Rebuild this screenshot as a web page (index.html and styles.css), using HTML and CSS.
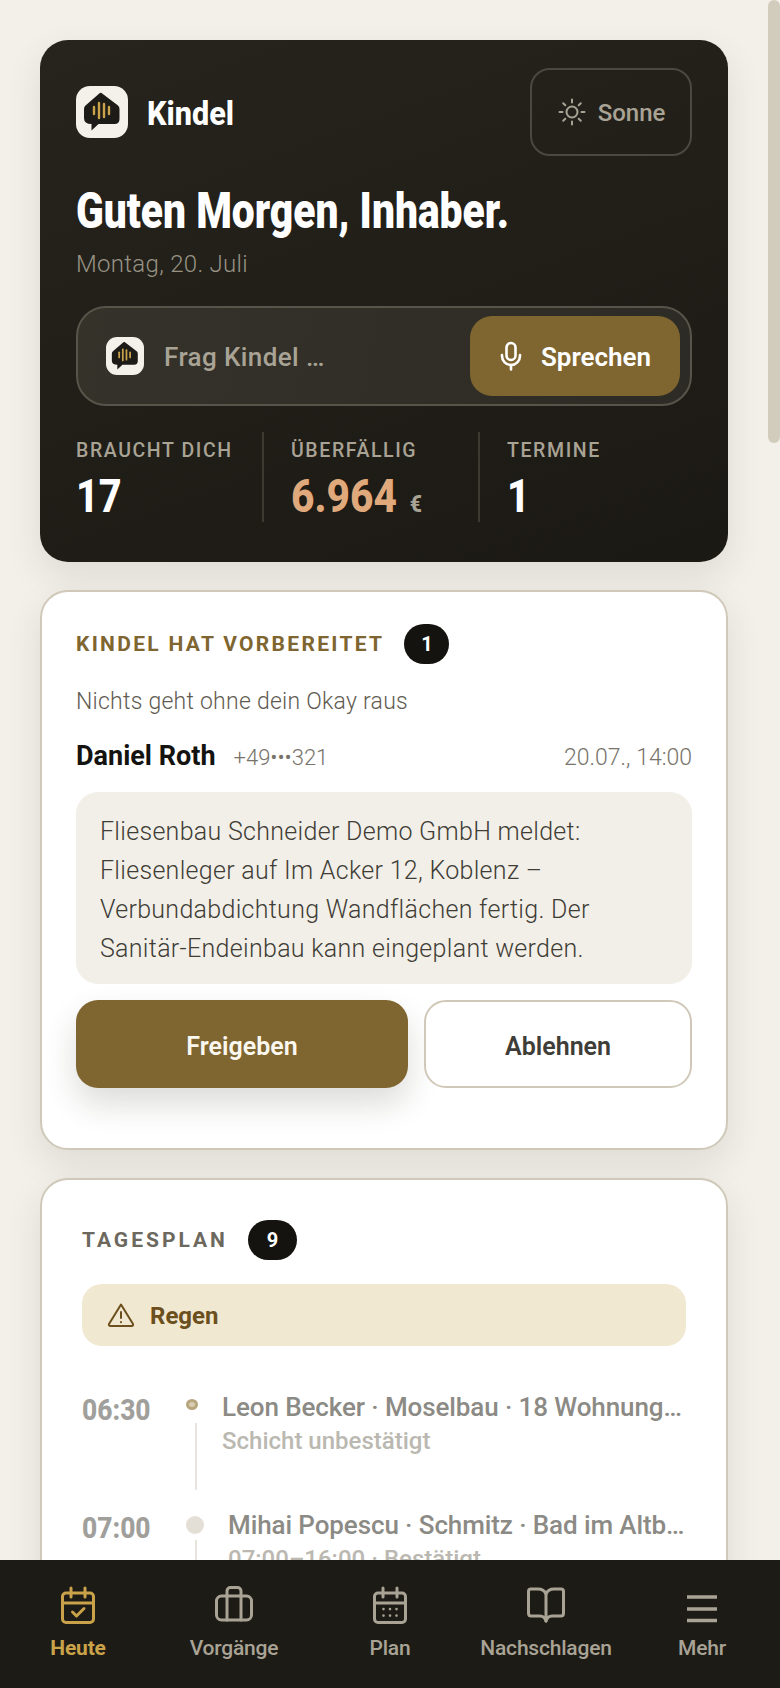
FILE: index.html
```html
<!DOCTYPE html>
<html lang="de">

<head>
    <meta charset="utf-8">
    <title>Kindel</title>
    <link rel="stylesheet" href="styles.css">
</head>

<body>
    <svg class="defs" width="0" height="0" aria-hidden="true">
        <symbol id="kindel-mark" viewBox="0 0 52 52">
            <path fill="#1c1b18" d="M25.5 7 L42 19.5 Q43.5 20.7 43.5 23 V33 Q43.5 38 38.5 38 H22.5 L15.5 44.5 V38 Q8 38 8 32 V23 Q8 20.7 9.5 19.5 L23 7.8 Q24.4 6.4 25.5 7 Z"/>
            <g stroke="#c9a24a" stroke-width="2.4" stroke-linecap="round">
                <path d="M18 21 V28"/>
                <path d="M23 17 V32"/>
                <path d="M28 18 V31"/>
                <path d="M33 21 V28"/>
            </g>
        </symbol>
    </svg>

    <div class="app">
        <div class="scroll-thumb"></div>
        <div class="scroller">
            <main class="page">
                <section class="hero">
                    <div class="hero-top">
                        <div class="brand">
                            <span class="brand-tile"><svg width="52" height="52"><use href="#kindel-mark"/></svg></span>
                            <span class="brand-name">Kindel</span>
                        </div>
                        <button class="theme-btn">
                            <svg width="30" height="30" viewBox="0 0 30 30" fill="none" stroke="currentColor" stroke-width="2" stroke-linecap="round">
                                <circle cx="15" cy="15" r="5.5"/>
                                <path d="M15 2.5 V5.5 M15 24.5 V27.5 M2.5 15 H5.5 M24.5 15 H27.5 M6.2 6.2 L8.3 8.3 M21.7 21.7 L23.8 23.8 M6.2 23.8 L8.3 21.7 M21.7 8.3 L23.8 6.2"/>
                            </svg>
                            <span class="nudge">Sonne</span>
                        </button>
                    </div>

                    <h1 class="greeting">Guten Morgen, Inhaber.</h1>
                    <div class="date">Montag, 20. Juli</div>

                    <div class="ask">
                        <span class="ask-tile"><svg width="38" height="38"><use href="#kindel-mark"/></svg></span>
                        <span class="ask-text">Frag Kindel …</span>
                        <button class="speak-btn">
                            <svg width="24" height="30" viewBox="0 0 24 30" fill="none" stroke="currentColor" stroke-width="2.6" stroke-linecap="round">
                                <rect x="7.5" y="2" width="9" height="17" rx="4.5"/>
                                <path d="M3 14 V15 A9 9 0 0 0 21 15 V14"/>
                                <path d="M12 24 V28.5"/>
                            </svg>
                            <span class="nudge">Sprechen</span>
                        </button>
                    </div>

                    <div class="stats">
                        <div class="stat">
                            <div class="stat-label">BRAUCHT DICH</div>
                            <div class="stat-value">17</div>
                        </div>
                        <div class="stat">
                            <div class="stat-label">ÜBERFÄLLIG</div>
                            <div class="stat-value overdue">6.964 <span class="unit">€</span></div>
                        </div>
                        <div class="stat">
                            <div class="stat-label">TERMINE</div>
                            <div class="stat-value">1</div>
                        </div>
                    </div>
                </section>

                <section class="card prepared">
                    <div class="card-head">
                        <h2 class="card-title gold">KINDEL HAT VORBEREITET</h2>
                        <span class="badge">1</span>
                    </div>
                    <p class="card-sub">Nichts geht ohne dein Okay raus</p>
                    <div class="sender">
                        <strong class="sender-name">Daniel Roth</strong>
                        <span class="sender-phone">+49•••321</span>
                        <span class="sender-date">20.07., 14:00</span>
                    </div>
                    <div class="message">
                        Fliesenbau Schneider Demo GmbH meldet:<br>
                        Fliesenleger auf Im Acker 12, Koblenz –<br>
                        Verbundabdichtung Wandflächen fertig. Der<br>
                        Sanitär-Endeinbau kann eingeplant werden.
                    </div>
                    <div class="actions">
                        <button class="btn-approve">Freigeben</button>
                        <button class="btn-reject">Ablehnen</button>
                    </div>
                </section>

                <section class="card plan">
                    <div class="card-head">
                        <h2 class="card-title">TAGESPLAN</h2>
                        <span class="badge wide">9</span>
                    </div>
                    <div class="weather">
                        <svg width="28" height="26" viewBox="0 0 28 26" fill="none" stroke="currentColor" stroke-width="2" stroke-linecap="round" stroke-linejoin="round">
                            <path d="M14 2.5 L26 22 Q26.6 24 24.5 24 H3.5 Q1.4 24 2 22 Z"/>
                            <path d="M14 10 V16"/>
                            <path d="M14 20 V20.2"/>
                        </svg>
                        <span class="nudge">Regen</span>
                    </div>

                    <div class="slot">
                        <div class="slot-time">06:30</div>
                        <div class="slot-rail">
                            <span class="dot open"></span>
                            <span class="rail-line"></span>
                        </div>
                        <div class="slot-body">
                            <div class="slot-title">Leon Becker · Moselbau · 18 Wohnung…</div>
                            <div class="slot-sub">Schicht unbestätigt</div>
                        </div>
                    </div>
                    <div class="slot">
                        <div class="slot-time">07:00</div>
                        <div class="slot-rail big">
                            <span class="dot"></span>
                            <span class="rail-line"></span>
                        </div>
                        <div class="slot-body">
                            <div class="slot-title">Mihai Popescu · Schmitz · Bad im Altb…</div>
                            <div class="slot-sub">07:00–16:00 · Bestätigt</div>
                        </div>
                    </div>
                </section>
            </main>
        </div>

        <nav class="tabbar">
            <a class="tab active">
                <svg width="40" height="40" viewBox="0 0 40 40" fill="none" stroke="currentColor" stroke-width="3" stroke-linecap="round" stroke-linejoin="round">
                    <rect x="4.5" y="8" width="31" height="29.5" rx="3.5"/>
                    <path d="M4.5 18 H35.5 M13 3 V12 M27 3 V12"/>
                    <path d="M14.5 27 L18.5 31 L26 23.5"/>
                </svg>
                <span>Heute</span>
            </a>
            <a class="tab">
                <svg width="40" height="40" viewBox="0 0 40 40" fill="none" stroke="currentColor" stroke-width="3" stroke-linecap="round" stroke-linejoin="round">
                    <rect x="2.5" y="11" width="35" height="24" rx="5"/>
                    <path d="M13 11 V6 A3.5 3.5 0 0 1 16.5 2.5 H23.5 A3.5 3.5 0 0 1 27 6 V11"/>
                    <path d="M13 11 V35 M27 11 V35"/>
                </svg>
                <span>Vorgänge</span>
            </a>
            <a class="tab">
                <svg width="40" height="40" viewBox="0 0 40 40" fill="none" stroke="currentColor" stroke-width="3" stroke-linecap="round" stroke-linejoin="round">
                    <rect x="4.5" y="8" width="31" height="29.5" rx="3.5"/>
                    <path d="M4.5 18 H35.5 M13 3 V12 M27 3 V12"/>
                    <path stroke-width="2.6" d="M13.5 24 V24.1 M20 24 V24.1 M26.5 24 V24.1 M13.5 30.5 V30.6 M20 30.5 V30.6 M26.5 30.5 V30.6"/>
                </svg>
                <span>Plan</span>
            </a>
            <a class="tab">
                <svg width="40" height="40" viewBox="0 0 40 40" fill="none" stroke="currentColor" stroke-width="3" stroke-linecap="round" stroke-linejoin="round">
                    <path d="M20 9 C18.5 5.5 15.5 4 12 4 H5 Q2.5 4 2.5 6.5 V28 Q2.5 31 5 31 H14 Q18.5 31 20 36 Q21.5 31 26 31 H35 Q37.5 31 37.5 28 V6.5 Q37.5 4 35 4 H28 C24.5 4 21.5 5.5 20 9 Z"/>
                    <path d="M20 9 V36"/>
                </svg>
                <span>Nachschlagen</span>
            </a>
            <a class="tab">
                <svg width="40" height="40" viewBox="0 0 40 40" fill="none" stroke="currentColor" stroke-width="3.4">
                    <path d="M5 12 H35 M5 24 H35 M5 35.5 H35"/>
                </svg>
                <span>Mehr</span>
            </a>
        </nav>
    </div>
</body>

</html>
```
FILE: styles.css
```css
* {
    box-sizing: border-box;
}

body {
    margin: 0;
    font-family: Roboto, sans-serif;
    background-color: #f3f0ea;
    color: #14130f;
}

h1,
h2,
p {
    margin: 0;
}

button {
    font-family: inherit;
    cursor: pointer;
}

.defs {
    display: block;
}

.app {
    position: relative;
    height: 1688px;
    overflow: hidden;
    display: flex;
    flex-direction: column;
}

.scroller {
    height: 1560px;
    flex: none;
    overflow: hidden;
}

.scroll-thumb {
    position: absolute;
    top: 0;
    right: 0;
    width: 12px;
    height: 443px;
    border-radius: 6px;
    background-color: #d2ccbd;
}

.page {
    padding: 40px 52px 0 40px;
}

.nudge {
    padding-top: 2px;
}

/* hero */
.hero {
    height: 522px;
    padding: 28px 36px 40px;
    border-radius: 28px;
    background: linear-gradient(160deg, #26241d, #1b1913);
    color: #fff;
    box-shadow: 0 14px 36px rgba(40, 35, 20, 0.1);
}

.hero-top {
    display: flex;
    justify-content: space-between;
    align-items: center;
}

.brand {
    display: flex;
    align-items: center;
    gap: 19px;
}

.brand-tile {
    width: 52px;
    height: 52px;
    border-radius: 14px;
    background-color: #f4f1ea;
    display: block;
}

.brand-tile svg,
.ask-tile svg {
    display: block;
}

.brand-name {
    display: block;
    padding-top: 2px;
    font-size: 34px;
    font-weight: 800;
    transform: scaleX(0.9);
    transform-origin: left;
}

.theme-btn {
    width: 162px;
    height: 88px;
    display: flex;
    align-items: center;
    justify-content: center;
    gap: 11px;
    background: transparent;
    border: 2px solid #4b483f;
    border-radius: 20px;
    color: #a9a395;
    font-size: 24px;
    font-weight: 500;
}

.greeting {
    margin-top: 27px;
    font-size: 50px;
    line-height: 56px;
    font-weight: 900;
    white-space: nowrap;
    transform: scaleX(0.815);
    transform-origin: left;
}

.date {
    margin-top: 9px;
    font-size: 24px;
    line-height: 32px;
    font-weight: 300;
    letter-spacing: 0.3px;
    color: #989385;
}

.ask {
    margin-top: 26px;
    height: 100px;
    display: flex;
    align-items: center;
    padding: 0 10px 0 28px;
    border: 2px solid #57544a;
    border-radius: 30px;
    background: linear-gradient(100deg, #35322a, #2d2b25);
}

.ask-tile {
    width: 38px;
    height: 38px;
    border-radius: 11px;
    background-color: #f4f1ea;
}

.ask-text {
    margin-left: 20px;
    padding-top: 2px;
    flex: 1;
    font-size: 26px;
    font-weight: 500;
    letter-spacing: 0.4px;
    color: #a9a395;
}

.speak-btn {
    width: 210px;
    height: 80px;
    display: flex;
    align-items: center;
    justify-content: center;
    gap: 18px;
    border: none;
    border-radius: 22px;
    background-color: #7f652f;
    color: #fff;
    font-size: 26px;
    font-weight: 600;
}

.stats {
    margin-top: 26px;
    display: grid;
    grid-template-columns: 186px 216px 1fr;
}

.stat {
    height: 90px;
    padding-top: 8px;
}

.stat + .stat {
    border-left: 2px solid #3d3a32;
    padding-left: 27px;
}

.stat-label {
    font-size: 19.5px;
    line-height: 22px;
    font-weight: 500;
    letter-spacing: 1.6px;
    color: #a9a395;
    white-space: nowrap;
}

.stat-value {
    margin-top: 9px;
    font-size: 46px;
    line-height: 50px;
    font-weight: 800;
    white-space: nowrap;
    transform: scaleX(0.86);
    transform-origin: left;
}

.stat-value.overdue {
    color: #e0a97c;
    transform: scaleX(0.885);
}

.unit {
    margin-left: 3px;
    font-size: 24px;
    color: #a9a395;
}

/* cards */
.card {
    margin-top: 28px;
    border: 2px solid #d0c9b9;
    border-radius: 28px;
    background-color: #fff;
    box-shadow: 0 14px 36px rgba(40, 35, 20, 0.1);
}

.prepared {
    height: 560px;
    padding: 32px 34px 0;
}

.plan {
    padding: 40px 40px 0;
}

.card-head {
    display: flex;
    align-items: center;
    gap: 20px;
}

.card-title {
    font-size: 21px;
    font-weight: 700;
    letter-spacing: 3px;
    color: #6c685e;
}

.card-title.gold {
    letter-spacing: 2.3px;
    color: #7f652f;
}

.badge {
    width: 45px;
    height: 40px;
    border-radius: 20px;
    background-color: #14130f;
    color: #fff;
    display: flex;
    align-items: center;
    justify-content: center;
    font-size: 20px;
    font-weight: 700;
}

.badge.wide {
    width: 49px;
}

.card-sub {
    margin-top: 22px;
    font-size: 23px;
    line-height: 32px;
    font-weight: 300;
    letter-spacing: 0.25px;
    color: #5f5b52;
}

.sender {
    margin-top: 20px;
    height: 36px;
    display: flex;
    align-items: baseline;
    line-height: 36px;
}

.sender-name {
    font-size: 27px;
    font-weight: 700;
}

.sender-phone {
    margin-left: 18px;
    flex: 1;
    padding-top: 1px;
    font-size: 22px;
    font-weight: 300;
    color: #77736a;
}

.sender-date {
    padding-top: 1px;
    font-size: 23px;
    font-weight: 300;
    color: #77736a;
}

.message {
    margin-top: 18px;
    height: 192px;
    padding: 20px 24px 0;
    border-radius: 22px;
    background-color: #f2efe8;
    font-size: 25px;
    line-height: 39px;
    font-weight: 300;
    letter-spacing: 0.3px;
    color: #3f3d36;
}

.actions {
    margin-top: 16px;
    display: flex;
    gap: 16px;
}

.actions button {
    height: 88px;
    padding-top: 5px;
    border-radius: 22px;
    font-size: 25px;
    font-weight: 600;
}

.btn-approve {
    width: 332px;
    border: none;
    background-color: #7f652f;
    color: #fbf8f0;
    box-shadow: 0 16px 32px rgba(40, 35, 20, 0.16);
}

.btn-reject {
    flex: 1;
    border: 2px solid #d0c9b9;
    background-color: #fff;
    color: #3f3d38;
}

.weather {
    margin-top: 24px;
    height: 62px;
    display: flex;
    align-items: center;
    gap: 15px;
    padding-left: 25px;
    border-radius: 20px;
    background-color: #f1e8d1;
    color: #6b4f1d;
    font-size: 24px;
    font-weight: 700;
}

.weather + .slot {
    margin-top: 43px;
}

.slot {
    height: 118px;
    display: flex;
    gap: 24px;
}

.slot-time {
    width: 80px;
    font-size: 30px;
    line-height: 42px;
    font-weight: 800;
    color: #a09f9b;
    transform: scaleX(0.88);
    transform-origin: left;
}

.slot-rail {
    display: flex;
    flex-direction: column;
}

.dot {
    width: 12px;
    height: 11px;
    margin-top: 10px;
    border-radius: 50%;
    border: 3px solid #b8a77e;
    background-color: #d8ceb2;
}

.rail-line {
    width: 2px;
    height: 67px;
    margin: 13px 0 0 9px;
    background-color: #e8e5de;
}

.big .dot {
    width: 18px;
    height: 18px;
    margin-top: 9px;
    border: none;
    background-color: #e3dfd7;
}

.big .rail-line {
    margin-top: 6px;
}

.slot-title {
    font-size: 26px;
    line-height: 36px;
    font-weight: 500;
    letter-spacing: -0.1px;
    color: #8c8a85;
    white-space: nowrap;
}

.slot-sub {
    font-size: 24px;
    line-height: 32px;
    font-weight: 500;
    color: #bab8b0;
    white-space: nowrap;
}

/* bottom bar */
.tabbar {
    flex: none;
    height: 128px;
    background-color: #1d1b15;
    display: grid;
    grid-template-columns: repeat(5, 1fr);
    padding-top: 25px;
}

.tab {
    display: flex;
    flex-direction: column;
    align-items: center;
    color: #a9a395;
}

.tab span {
    margin-top: 8px;
    font-size: 21px;
    line-height: 30px;
    font-weight: 500;
    letter-spacing: -0.2px;
}

.tab.active {
    color: #c9a24a;
}

.tab.active span {
    font-weight: 700;
}
```
